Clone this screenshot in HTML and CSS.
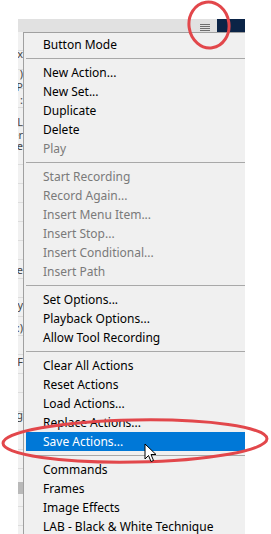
FILE: index.html
```html
<!DOCTYPE html>
<html lang="en">
<head>
  <meta charset="UTF-8" />
  <title>Actions panel menu</title>
  <link rel="stylesheet" href="styles.css">
</head>
<body>
  <div class="frame">
    <div class="titlebar">
      <div class="tab-area">
        <span class="panel-menu-btn"><i></i><i></i><i></i><i></i></span>
      </div>
      <div class="dark-block"></div>
    </div>

    <div class="panel-body">
      <!-- what's left visible of the actions list behind the menu -->
      <div class="side-strip">
        <div class="frag" style="top:16px">ix</div>
        <div class="frag" style="top:36px">)</div>
        <div class="frag" style="top:49px">'P</div>
        <div class="frag" style="top:62px">:</div>
        <div class="frag" style="top:84px">L</div>
        <div class="frag" style="top:97px">er</div>
        <div class="frag" style="top:108px">re</div>
        <div class="frag" style="top:232px">e</div>
        <div class="frag" style="top:267px">y</div>
        <div class="frag" style="top:290px">:)</div>
        <div class="frag" style="top:324px">F</div>
        <div class="frag" style="top:377px">g</div>
        <div class="scroll-thumb"></div>
      </div>

      <ul class="menu">
        <li class="item">Button Mode</li>
        <li class="sep"></li>
        <li class="item">New Action...</li>
        <li class="item">New Set...</li>
        <li class="item">Duplicate</li>
        <li class="item">Delete</li>
        <li class="item disabled">Play</li>
        <li class="sep"></li>
        <li class="item disabled">Start Recording</li>
        <li class="item disabled">Record Again...</li>
        <li class="item disabled">Insert Menu Item...</li>
        <li class="item disabled">Insert Stop...</li>
        <li class="item disabled">Insert Conditional...</li>
        <li class="item disabled">Insert Path</li>
        <li class="sep"></li>
        <li class="item">Set Options...</li>
        <li class="item">Playback Options...</li>
        <li class="item">Allow Tool Recording</li>
        <li class="sep"></li>
        <li class="item">Clear All Actions</li>
        <li class="item">Reset Actions</li>
        <li class="item">Load Actions...</li>
        <li class="item">Replace Actions...</li>
        <li class="item active">Save Actions...</li>
        <li class="sep"></li>
        <li class="item">Commands</li>
        <li class="item">Frames</li>
        <li class="item">Image Effects</li>
        <li class="item">LAB - Black &amp; White Technique</li>
      </ul>
    </div>
  </div>

  <!-- red callout marks drawn over the screenshot -->
  <svg class="marks" width="271" height="534" viewBox="0 0 271 534">
    <ellipse cx="209" cy="25" rx="20" ry="23" transform="rotate(-8 209 25)" />
    <ellipse cx="135" cy="441" rx="132" ry="21" transform="rotate(-1 135 441)" />
  </svg>

  <svg class="cursor" width="14" height="20" viewBox="0 0 14 20">
    <path d="M1 1 L1 16 L4.5 12.5 L7 18.5 L9.5 17.5 L7 11.5 L12 11.5 Z" />
  </svg>
</body>
</html>
```

FILE: styles.css
```css
* {
  margin: 0;
  padding: 0;
  box-sizing: border-box;
}

body {
  font-family: 'Noto Sans', 'Open Sans', sans-serif;
  font-size: 12px;
  background: white;
  width: 271px;
  height: 534px;
  overflow: hidden;
  position: relative;
  padding: 19px 0 0 18px;
}

.frame {
  width: 227px;
}

.titlebar {
  display: flex;
  height: 13px;
}

.tab-area {
  flex: 1;
  background: #e1e1e1;
  display: flex;
  justify-content: flex-end;
  align-items: center;
  padding-right: 7px;
}

.panel-menu-btn {
  display: flex;
  flex-direction: column;
  gap: 1px;
  width: 10px;
  margin-top: 3px;
}

.panel-menu-btn i {
  display: block;
  height: 1px;
  background: #6e6e6e;
}

.dark-block {
  width: 28px;
  background: #0b2447;
}

.panel-body {
  display: flex;
  height: 502px;
}

.side-strip {
  width: 5px;
  position: relative;
  overflow: hidden;
  background: repeating-linear-gradient(to bottom, #f1f1f1 0, #f1f1f1 18px, #dcdcdc 18px, #dcdcdc 19px);
}

.frag {
  position: absolute;
  right: 0;
  font-size: 11px;
  line-height: 11px;
  color: #444;
  white-space: nowrap;
}

.scroll-thumb {
  position: absolute;
  top: 450px;
  left: 0;
  width: 5px;
  height: 12px;
  background: #b9b9b9;
}

.menu {
  flex: 1;
  list-style: none;
  background: #f0f0f0;
  border-left: 1px solid #a0a0a0;
  border-top: 1px solid #a0a0a0;
  padding-top: 2px;
}

.item {
  height: 19px;
  line-height: 19px;
  margin-left: 2px;
  padding-left: 17px;
  color: #000;
  white-space: nowrap;
}

.item.disabled {
  color: #7a7a7a;
}

.item.active {
  background: #0078d7;
  color: white;
}

.sep {
  height: 1px;
  margin: 4px 0 4px 2px;
  background: #a8a8a8;
}

.marks {
  position: absolute;
  top: 0;
  left: 0;
  pointer-events: none;
}

.marks ellipse {
  fill: none;
  stroke: #e2474b;
  stroke-width: 3;
}

.cursor {
  position: absolute;
  left: 144px;
  top: 443px;
}

.cursor path {
  fill: white;
  stroke: black;
  stroke-width: 1;
  stroke-linejoin: round;
}
```
